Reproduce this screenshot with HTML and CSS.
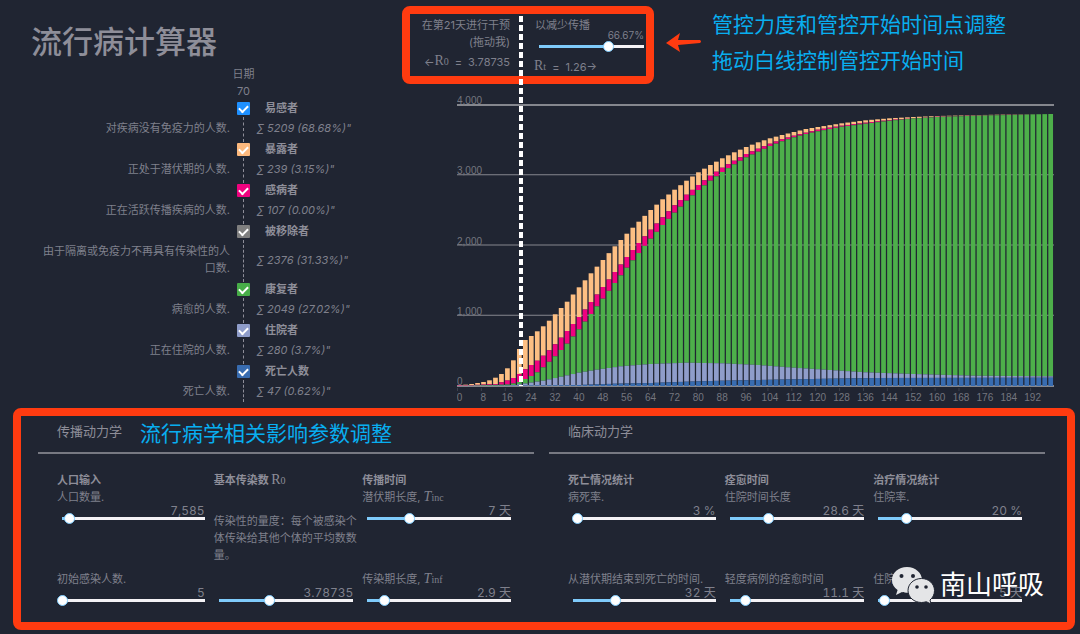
FILE: index.html
```html
<!DOCTYPE html>
<html lang="zh-CN">
<head>
<meta charset="utf-8">
<title>流行病计算器</title>
<link rel="stylesheet" href="styles.css">
</head>
<body>
<main class="app">
  <div class="overview">
    <section class="summary">
      <h1 class="title">流行病计算器</h1>
      <div class="day"><span>日期</span><span>70</span></div>
      <ul class="legend">
        <li class="state blue">
          <label class="name" for="s1">易感者</label>
          <p class="about">对疾病没有免疫力的人数.</p>
          <div class="rail"><input type="checkbox" id="s1" checked></div>
          <p class="count">∑ 5209 (68.68%)"</p>
        </li>
        <li class="state orange">
          <label class="name" for="s2">暴露者</label>
          <p class="about">正处于潜伏期的人数.</p>
          <div class="rail"><input type="checkbox" id="s2" checked></div>
          <p class="count">∑ 239 (3.15%)"</p>
        </li>
        <li class="state pink">
          <label class="name" for="s3">感病者</label>
          <p class="about">正在活跃传播疾病的人数.</p>
          <div class="rail"><input type="checkbox" id="s3" checked></div>
          <p class="count">∑ 107 (0.00%)"</p>
        </li>
        <li class="state gray">
          <label class="name" for="s4">被移除者</label>
          <p class="about">由于隔离或免疫力不再具有传染性的人口数.</p>
          <div class="rail"><input type="checkbox" id="s4" checked></div>
          <p class="count">∑ 2376 (31.33%)"</p>
        </li>
        <li class="state green">
          <label class="name" for="s5">康复者</label>
          <p class="about">病愈的人数.</p>
          <div class="rail"><input type="checkbox" id="s5" checked></div>
          <p class="count">∑ 2049 (27.02%)"</p>
        </li>
        <li class="state lilac">
          <label class="name" for="s6">住院者</label>
          <p class="about">正在住院的人数.</p>
          <div class="rail"><input type="checkbox" id="s6" checked></div>
          <p class="count">∑ 280 (3.7%)"</p>
        </li>
        <li class="state navy">
          <label class="name" for="s7">死亡人数</label>
          <p class="about">死亡人数.</p>
          <div class="rail"><input type="checkbox" id="s7" checked></div>
          <p class="count">∑ 47 (0.62%)"</p>
        </li>
      </ul>
    </section>

    <section class="simulation">
      <div class="controls">
        <div class="intervention">
          <div class="before">
            <p>在第21天进行干预</p>
            <p>(拖动我)</p>
            <p class="rate">←<span class="math">R<small>0</small></span> <span>=</span> <span>3.78735</span></p>
          </div>
          <div class="after">
            <label for="cut">以减少传播</label>
            <output class="percent" for="cut">66.67%</output>
            <input type="range" id="cut" value="70" style="--p:.7">
            <p class="rate"><span class="math">R<small>t</small></span> <span>=</span> <span>1.26→</span></p>
          </div>
        </div>
        <svg class="arrow" viewBox="0 0 36 20" aria-hidden="true"><path d="M0 10 14 0 12 7 34 7Q36 8.500 34 10L12 12 14 19Z" fill="#ff3b10"/></svg>
        <p class="note">管控力度和管控开始时间点调整<br>拖动白线控制管控开始时间</p>
      </div>
      <svg class="chart" id="chart" viewBox="0 0 600 311" role="img" aria-label="各状态人数随天数变化"></svg>
      <div class="marker"></div>
    </section>
  </div>

  <section class="parameters">
    <div class="panel">
      <header class="head"><h2>传播动力学</h2><p class="note">流行病学相关影响参数调整</p></header>
      <div class="fields">
        <div class="field">
          <h3>人口输入</h3>
          <label for="p1">人口数量.</label>
          <output for="p1">7,585</output><input type="range" id="p1" value="5" style="--p:.05">
        </div>
        <div class="field">
          <h3>基本传染数 <span class="math">R<small>0</small></span></h3>
        </div>
        <div class="field">
          <h3>传播时间</h3>
          <label for="p3">潜伏期长度, <span class="math"><i>T</i><small>inc</small></span></label>
          <output for="p3">7 天</output><input type="range" id="p3" value="30" style="--p:.3">
        </div>
        <div class="field second">
          <label for="p4">初始感染人数.</label>
          <output for="p4">5</output><input type="range" id="p4" value="0" style="--p:0">
        </div>
        <div class="field tall">
          <label for="p5">传染性的量度：每个被感染个体传染给其他个体的平均数数量。</label>
          <output for="p5">3.78735</output><input type="range" id="p5" value="39" style="--p:.39">
        </div>
        <div class="field second">
          <label for="p6">传染期长度, <span class="math"><i>T</i><small>inf</small></span></label>
          <output for="p6">2.9 天</output><input type="range" id="p6" value="12" style="--p:.12">
        </div>
      </div>
    </div>
    <div class="panel">
      <header class="head"><h2>临床动力学</h2></header>
      <div class="fields">
        <div class="field">
          <h3>死亡情况统计</h3>
          <label for="c1">病死率.</label>
          <output for="c1">3 %</output><input type="range" id="c1" value="3" style="--p:.03">
        </div>
        <div class="field">
          <h3>痊愈时间</h3>
          <label for="c2">住院时间长度</label>
          <output for="c2">28.6 天</output><input type="range" id="c2" value="30" style="--p:.3">
        </div>
        <div class="field">
          <h3>治疗情况统计</h3>
          <label for="c3">住院率.</label>
          <output for="c3">20 %</output><input type="range" id="c3" value="20" style="--p:.2">
        </div>
        <div class="field second">
          <label for="c4">从潜伏期结束到死亡的时间.</label>
          <output for="c4">32 天</output><input type="range" id="c4" value="31" style="--p:.31">
        </div>
        <div class="field second">
          <label for="c5">轻度病例的痊愈时间</label>
          <output for="c5">11.1 天</output><input type="range" id="c5" value="12" style="--p:.12">
        </div>
        <div class="field second">
          <label for="c6">住院时间.</label>
          <output for="c6">5 天</output><input type="range" id="c6" value="4" style="--p:.04">
        </div>
      </div>
    </div>
    <div class="watermark">
      <svg viewBox="0 0 43 37" aria-hidden="true">
        <path d="M15 0C6.500 0 0 5.600 0 13c0 4.300 2.100 7.700 5.600 10L4 28l6-3c2 .6 3.500.8 5.500.8C24 25.500 30 20 30 13S23.500 0 15 0Z" fill="#e4e5e7"/>
        <circle cx="9.500" cy="9" r="2" fill="#202532"/><circle cx="21" cy="9" r="2" fill="#202532"/>
        <path d="M29.500 11.500C22 11.500 16 16.800 16 23.500S22 35.500 29.500 35.500c1.700 0 3.300-.3 4.800-.8L39 37l-1-4c2.800-2.200 4.500-5.500 4.500-9.500 0-6.700-5.800-12-13-12Z" fill="#e4e5e7" stroke="#202532"/>
        <circle cx="25" cy="20" r="1.800" fill="#202532"/><circle cx="34" cy="20" r="1.800" fill="#202532"/>
      </svg>
      <span>南山呼吸</span>
    </div>
  </section>
</main>
<script src="chart.js"></script>
</body>
</html>
```

FILE: styles.css
```css
* { box-sizing: border-box; }

body, h1, h2, h3, p, ul { margin: 0; padding: 0; }

body {
  background: #202532;
  color: #7f808c;
  font: 11px/17px Inter, "Noto Sans CJK SC", sans-serif;
}

.overview {
  display: grid;
  grid-template-columns: 402px 1fr;
}

.title {
  padding: 20px 0 0 31px;
  font-size: 31px;
  line-height: 44px;
  font-weight: 500;
  color: #8e8e99;
}

.day {
  display: flex;
  flex-direction: column;
  align-items: center;
  width: 487px;
  padding: 2px 0;
}

.legend { list-style: none; }

.state {
  display: grid;
  grid-template-columns: 230px 27px 1fr;
  grid-template-rows: 13px auto;
  row-gap: 5px;
}

.state .name {
  grid-area: 1 / 3;
  padding-left: 8px;
  line-height: 13px;
  font-weight: 700;
  color: #8e8e99;
}

.about {
  grid-area: 2 / 1;
  padding: 0 0 6px 40px;
  text-align: right;
}

.rail {
  grid-area: 1 / 2 / 3 / 3;
  display: flex;
  flex-direction: column;
  align-items: center;
  gap: 2px;
}

.rail::after {
  content: "";
  flex: 1;
  margin-bottom: 1px;
  border-left: 1px dashed #8e8e99;
}

.state:last-child .rail::after { margin-bottom: 4px; }

.rail input {
  appearance: none;
  width: 13px;
  height: 13px;
  margin: 0;
  border-radius: 1px;
  background: var(--tone);
  display: grid;
  place-items: center;
}

.rail input:checked::before {
  content: "";
  width: 7px;
  height: 4px;
  margin-bottom: 2px;
  border: solid #fff;
  border-width: 0 0 2px 2px;
  transform: rotate(-45deg);
}

.blue { --tone: #1e90ff; }
.orange { --tone: #fdb97d; }
.pink { --tone: #f0027f; }
.gray { --tone: #7f7f7f; }
.green { --tone: #47ad48; }
.lilac { --tone: #8f9dca; }
.navy { --tone: #386cb0; }

.count {
  grid-area: 2 / 3;
  align-self: center;
  padding-bottom: 6px;
  font-style: italic;
}

.simulation { position: relative; }

.controls {
  display: flex;
  align-items: flex-start;
  padding-top: 6px;
}

.intervention {
  display: grid;
  grid-template-columns: 100px 110px;
  column-gap: 24px;
  width: 252px;
  height: 78px;
  border: 8px solid #ff3b10;
  border-radius: 8px;
}

.before { padding-top: 3px; text-align: right; }
.before .rate { justify-content: flex-end; padding-top: 3px; }

.after { display: flex; flex-direction: column; padding-top: 3px; }
.after label { padding-left: 1px; }
.after .percent { margin-top: -5px; font-size: 10px; line-height: 12px; text-align: right; }
.after .rate { padding-top: 7px; }
.after input { margin-top: -2px; }

.rate { display: flex; gap: 6px; }

.math { font-family: "Liberation Serif", serif; font-weight: 400; font-size: 14px; line-height: 14px; }
.math small { font-size: 10px; }
.rate .math { margin-left: -6px; }
.after .rate .math { margin-left: 0; }

.arrow { width: 36px; height: 20px; margin: 27px 10px 0 12px; }

.note {
  padding-top: 1px;
  color: #08aef0;
  font-size: 21px;
  line-height: 36px;
  white-space: nowrap;
}

.chart {
  display: block;
  width: calc(100% - 78px);
  margin: 11px 0 0 55px;
  font: 10px "Liberation Sans", sans-serif;
  fill: #74767f;
}

.marker {
  position: absolute;
  left: 117px;
  top: 16px;
  bottom: 20px;
  width: 4px;
  background: repeating-linear-gradient(#fff 0 6px, transparent 6px 9px);
}

input[type="range"] {
  appearance: none;
  display: block;
  width: 100%;
  height: 11px;
  margin: 0;
  background:
    linear-gradient(#7fcbfb, #7fcbfb) 5px center / calc((100% - 11px) * var(--p)) 3px no-repeat,
    linear-gradient(#f4f2f5, #f4f2f5) right center / calc(100% - 5px) 3px no-repeat;
}

input[type="range"]::-webkit-slider-thumb {
  appearance: none;
  width: 11px;
  height: 11px;
  border: 1px solid #7fcbfb;
  border-radius: 50%;
  background: #fff;
}

.parameters {
  position: relative;
  display: grid;
  grid-template-columns: 1fr 1fr;
  gap: 15px;
  margin: 2px 5px 3px 13px;
  padding: 0 22px 16px 17px;
  border: 8px solid #ff3b10;
  border-radius: 8px;
}

.head {
  display: flex;
  gap: 18px;
  height: 38px;
  padding-left: 19px;
  border-bottom: 2px solid #777982;
}

.head h2 { font-size: 13px; line-height: 30px; font-weight: 400; color: #8e8e99; }
.head .note { line-height: 34px; }

.fields {
  display: grid;
  grid-template-columns: 148fr 140fr 149fr;
  column-gap: 9px;
  padding: 18px 23px 0 19px;
}

.field { display: flex; flex-direction: column; }
.field h3 { font-size: 11px; line-height: 17px; font-weight: 700; color: #8e8e99; white-space: nowrap; }
.field label { white-space: nowrap; }
.field output {
  margin-top: -4px;
  font-size: 12px;
  line-height: 17px;
  height: 11px;
  text-align: right;
  font-variant-numeric: tabular-nums;
}
.field.second { padding-top: 47px; }
.field.tall { margin-top: -11px; }
.field.tall label { white-space: normal; margin-right: -4px; }
.field.tall output { margin-top: auto; }

.watermark {
  position: absolute;
  right: 23px;
  bottom: 18px;
  display: flex;
  align-items: center;
  gap: 5px;
  color: #fff;
  font-size: 26px;
  line-height: 38px;
}

.watermark svg { width: 43px; height: 37px; }
```

FILE: chart.js
```js
// Cumulative top edge of each layer: [bar index, height above the axis].
const layers = [
  ["#fdbf83", [[0,.7],[2,2],[3,3],[4,4],[5,5.7],[6,8.3],[7,12],[8,17.7],[9,25.7],[10,37],[11,46],[12,50],[13,54.7],[14,59.7],[15,65.3],[16,71.7],[18,84.3],[20,98.7],[22,112.7],[24,126],[26,139.7],[28,152.3],[30,164.3],[32,176],[34,186.7],[36,196.3],[38,205.3],[40,213.7],[42,221],[44,227.7],[46,233.7],[48,239],[50,243.7],[52,247.7],[54,251],[56,254],[58,257],[60,259],[64,262.7],[68,265.7],[72,267.7],[76,269],[80,270],[86,270.8],[90,271.3],[99,272]]],
  ["#f0027f", [[0,.4],[6,2],[8,5.5],[9,8],[10,12],[11,16.7],[12,21],[13,25.3],[14,30.3],[15,35.7],[16,41.7],[18,55],[20,69],[22,84],[24,99],[26,114],[28,129],[30,143],[32,156.3],[34,168.7],[36,180.7],[38,191.3],[40,201],[42,210.3],[44,218.3],[46,225.3],[48,232],[50,237.3],[52,242.3],[54,246.7],[56,250.3],[58,253.3],[60,256.3],[64,260.3],[68,263.3],[72,266],[80,269.3],[86,270.4],[99,272]]],
  ["#4daf4a", [[0,0],[8,1.5],[9,2.5],[10,4],[11,7],[12,10],[13,13.7],[14,18.7],[16,29.7],[18,42.3],[20,56.7],[22,72],[24,87.3],[26,103],[28,118.3],[30,133],[32,147.3],[34,161],[36,173.3],[38,185.3],[40,196],[42,205.3],[44,214],[46,221.7],[48,228.7],[50,234.3],[52,240],[54,244.7],[56,248.7],[58,252],[60,254.7],[64,259.3],[68,262.3],[72,265.3],[76,267.5],[80,269],[86,270.2],[99,272]]],
  ["#8f9dca", [[0,0],[8,.3],[11,2.5],[14,5.3],[17,9.3],[20,13.3],[23,16.3],[27,19.7],[32,22],[38,23.3],[44,22.7],[50,21],[56,18.3],[62,16],[68,13.7],[76,12],[86,10.3],[99,9.7]]],
  ["#386cb0", [[0,0],[20,1],[26,2.3],[32,3],[38,4.3],[44,5.3],[50,6],[56,6.7],[62,7.3],[70,8],[99,8.3]]]
];

function heightAt(points, i) {
  const next = points.findIndex(p => p[0] >= i);
  if (next <= 0) return points[0][1];
  const [x0, y0] = points[next - 1];
  const [x1, y1] = points[next];
  return y0 + (y1 - y0) * (i - x0) / (x1 - x0);
}

const BASE = 291, PITCH = 5.97, STEP = 70.25;
let out = "";
for (let k = 0; k <= 4; k++) {
  const y = BASE - k * STEP;
  out += `<rect x="0" y="${y - 1}" width="597" height="${k % 4 ? 1 : 2}" fill="#85878e"/>`;
}
for (let i = 0; i < 100; i++) {
  const x = (i * PITCH + 0.3).toFixed(2);
  layers.forEach(([color, points], n) => {
    const top = heightAt(points, i);
    const bottom = n < layers.length - 1 ? heightAt(layers[n + 1][1], i) : 0;
    if (top - bottom > 0.05) {
      out += `<rect x="${x}" y="${(BASE - top).toFixed(2)}" width="4.7" height="${(top - bottom).toFixed(2)}" fill="${color}"/>`;
    }
  });
}
for (let k = 0; k <= 4; k++) {
  out += `<text x="0" y="${Math.round(BASE - k * STEP) - 1}">${(k * 1000).toLocaleString("en-US")}</text>`;
}
for (let day = 0; day <= 192; day += 8) {
  const x = day / 2 * PITCH;
  out += `<rect x="${x}" y="293" width="1" height="3" fill="#3d414d"/>`;
  out += `<text x="${x + 2.5}" y="306" text-anchor="middle">${day}</text>`;
}
document.getElementById("chart").innerHTML = out;
```
